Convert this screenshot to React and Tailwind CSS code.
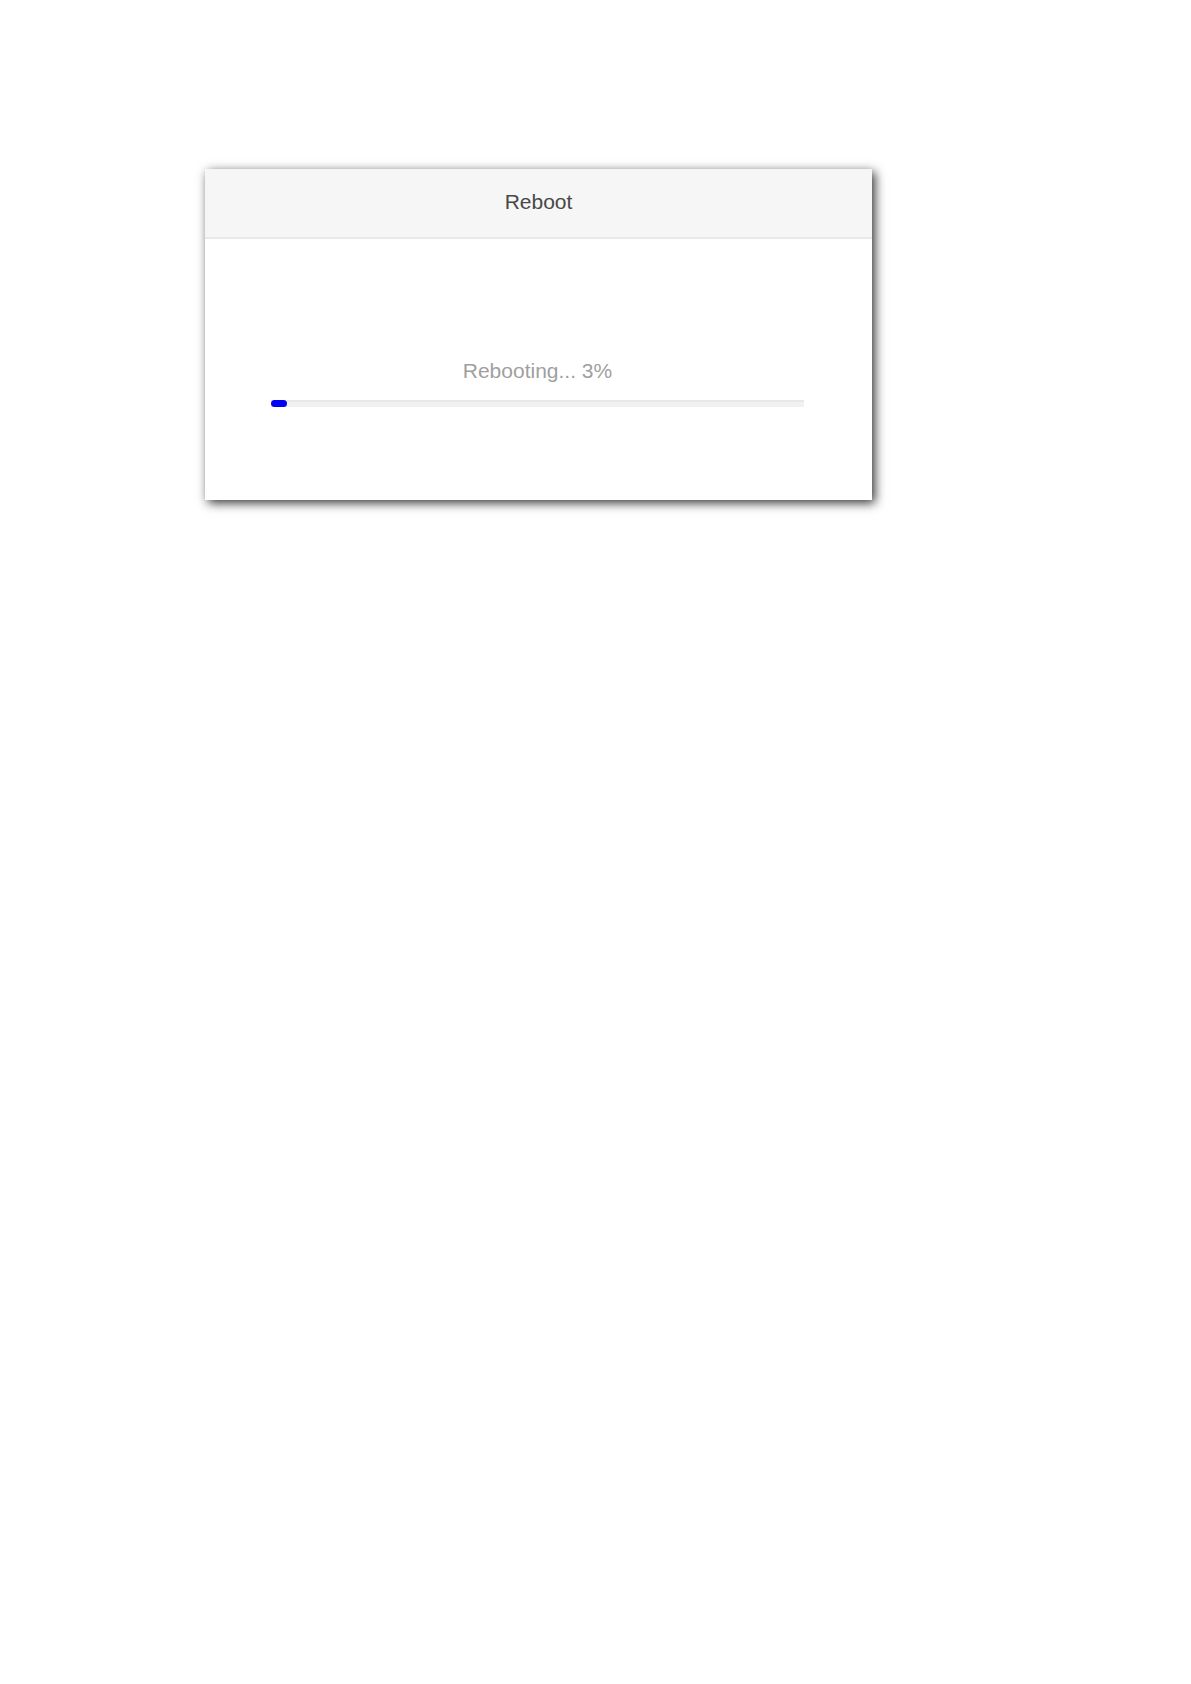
import React, { useState } from "react";

const ProgressBar = ({ value, label }) => {
  return (
    <div
      role="progressbar"
      aria-label={label}
      aria-valuenow={value}
      aria-valuemin={0}
      aria-valuemax={100}
      className="w-full h-[7px] bg-[#f1f1f1] shadow-[inset_0_2px_1px_#e8e8e8]"
    >
      <div
        className="h-full rounded-full bg-[#0000f5]"
        style={{ width: `${value}%` }}
      ></div>
    </div>
  );
};

const App = () => {
  const [progress] = useState(3);

  return (
    <main className="min-h-screen bg-white pt-[169px] pb-10 pl-[205px] pr-[319px] font-['Liberation_Sans',Arial,sans-serif] text-[21px] leading-6">
      <section className="bg-white shadow-[3px_3px_10px_rgba(0,0,0,0.8)]">
        <header className="border-b-2 border-[#e9e9e9] bg-[#f6f6f6] pt-[21px] pb-[23px] text-center">
          <h1 className="text-[#484848]">Reboot</h1>
        </header>
        <div className="pt-[120px] pb-[93px] pl-[66px] pr-[68px]">
          <p className="mb-[17px] text-center text-[#9f9f9f]">
            Rebooting... {progress}%
          </p>
          <ProgressBar value={progress} label="Rebooting" />
        </div>
      </section>
    </main>
  );
};

export default App;
